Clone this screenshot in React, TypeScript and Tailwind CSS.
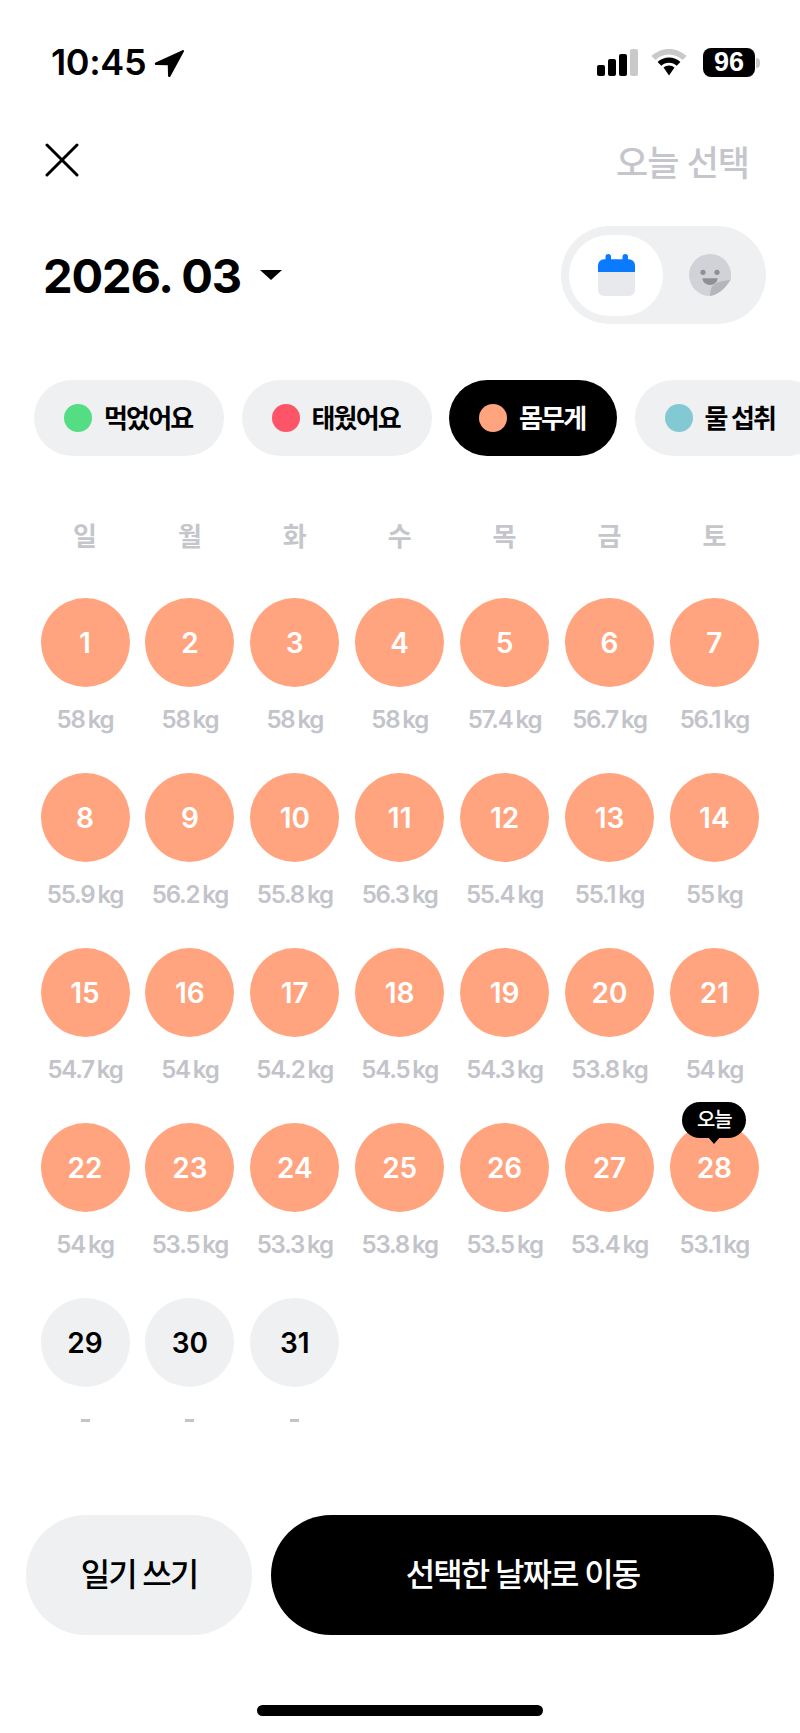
const FONT = "font-['Inter','Noto_Sans_CJK_KR',sans-serif]"

const weekdays = ['일', '월', '화', '수', '목', '금', '토']

const weights = [
  '58', '58', '58', '58', '57.4', '56.7', '56.1',
  '55.9', '56.2', '55.8', '56.3', '55.4', '55.1', '55',
  '54.7', '54', '54.2', '54.5', '54.3', '53.8', '54',
  '54', '53.5', '53.3', '53.8', '53.5', '53.4', '53.1',
]

const filters = [
  { label: '먹었어요', dot: 'bg-[#55dd84]', width: 'w-[190px]' },
  { label: '태웠어요', dot: 'bg-[#fd5468]', width: 'w-[190px]' },
  { label: '몸무게', dot: 'bg-[#ffa47e]', width: 'w-[168px]', active: true },
  { label: '물 섭취', dot: 'bg-[#83c9d3]', width: 'w-[190px]' },
]

function StatusBar() {
  return (
    <div className="flex items-center justify-between pt-[48px] pl-[51px] pr-[40px] h-[77px]">
      <div className="flex items-center gap-[8px]">
        <span className="text-[36px] leading-[29px] font-semibold tracking-[-0.01em] text-black">10:45</span>
        <svg width="30" height="28" viewBox="0 0 30 28">
          <path d="M28.5 1.2 1.6 13.6c-1.3.6-.9 2.500.5 2.500l11.700.1.200 10.600c0 1.400 1.900 1.800 2.500.5L29.900 2.600c.4-.9-.5-1.800-1.400-1.400Z" fill="#000" />
        </svg>
      </div>
      <div className="flex items-center">
        <div className="flex items-end gap-[3px] h-[27px]">
          <div className="w-[8px] h-[11px] rounded-[2px] bg-black" />
          <div className="w-[8px] h-[17px] rounded-[2px] bg-black" />
          <div className="w-[8px] h-[22px] rounded-[2px] bg-black" />
          <div className="w-[8px] h-[27px] rounded-[2px] bg-[#c9c9c9]" />
        </div>
        <svg className="ml-[13px]" width="36" height="27" viewBox="0 0 36 27">
          <path d="M18 0C11.200 0 5 2.700.4 7.100l4 4C8 7.700 12.800 5.600 18 5.600s10 2.100 13.600 5.500l4-4C31 2.700 24.800 0 18 0Z" fill="#c9c9c9" />
          <path d="M18 8.500c-4.400 0-8.400 1.700-11.400 4.500l3.700 3.700c2-1.800 4.700-3 7.700-3s5.700 1.200 7.700 3l3.700-3.700c-3-2.800-7-4.500-11.400-4.500Z" fill="#000" />
          <path d="M18 16.500c-2.100 0-4 .8-5.500 2.100L18 26.500l5.500-7.900c-1.500-1.300-3.400-2.100-5.500-2.100Z" fill="#000" />
        </svg>
        <div className="ml-[16px] w-[52px] h-[29px] rounded-[8px] bg-black flex items-center justify-center text-white text-[27px] font-bold font-['Liberation_Sans',sans-serif] leading-none">
          96
        </div>
        <div className="ml-[1px] w-[4px] h-[10px] rounded-r-full bg-[#c9c9c9]" />
      </div>
    </div>
  )
}

function CloseIcon() {
  return (
    <svg width="34" height="34" viewBox="0 0 34 34" fill="none" stroke="#000" strokeWidth="3" strokeLinecap="round">
      <path d="M2 2 32 32" />
      <path d="M32 2 2 32" />
    </svg>
  )
}

function CalendarIcon() {
  return (
    <svg width="37" height="42" viewBox="0 0 37 42">
      <path d="M0 18h37v18a6 6 0 0 1-6 6H6a6 6 0 0 1-6-6Z" fill="#e8e9ec" />
      <rect x="7.500" y="0" width="5.500" height="10" rx="2.750" fill="#0a7bff" />
      <rect x="24.500" y="0" width="5.500" height="10" rx="2.750" fill="#0a7bff" />
      <path d="M6 5.300h25a6 6 0 0 1 6 6V18H0v-6.700a6 6 0 0 1 6-6Z" fill="#0a7bff" />
    </svg>
  )
}

function StickerIcon() {
  return (
    <svg width="42" height="42" viewBox="0 0 42 42">
      <path d="M21 0a21 21 0 0 1 20.500 26L21 42A21 21 0 0 1 21 0Z" fill="#d0d2d7" />
      <circle cx="14" cy="18.300" r="2.600" fill="#8e9096" />
      <circle cx="28" cy="18.300" r="2.600" fill="#8e9096" />
      <path d="M13.500 24.300h15c0 3.800-3.300 6.700-7.500 6.700s-7.500-2.900-7.500-6.700Z" fill="#8e9096" />
      <path d="M41.500 26c-6 .6-13 1.600-17 5-2.600 2.200-3.500 6.500-3.500 11 7-.5 15-7 20.500-16Z" fill="#b4b6ba" />
    </svg>
  )
}

function DayCell({ day, weight }: { day: number; weight?: string }) {
  const logged = weight !== undefined
  return (
    <div className="relative flex flex-col items-center">
      {day === 28 && (
        <div className="absolute top-[-21px] left-1/2 -translate-x-1/2 z-10 flex flex-col items-center">
          <div className="w-[64px] h-[36px] rounded-[18px] bg-black text-white text-[20px] font-medium tracking-[-0.05em] flex items-center justify-center">
            오늘
          </div>
          <div className="-mt-px w-0 h-0 border-x-[6px] border-x-transparent border-t-[7px] border-t-black" />
        </div>
      )}
      <div
        className={`w-[89px] h-[89px] rounded-full flex items-center justify-center text-[28px] font-semibold ${
          logged ? 'bg-[#ffa47e] text-white' : 'bg-[#eff0f2] text-black'
        }`}
      >
        {day}
      </div>
      <div className="mt-[13px] h-[40px] flex items-center text-[24px] font-semibold tracking-[-0.05em] text-[#c2c4ca] whitespace-nowrap">
        {logged ? (
          <>
            {weight}
            <span className="ml-[3px]">kg</span>
          </>
        ) : (
          <span className="w-[9px] h-[3px] bg-[#c2c4ca]" />
        )}
      </div>
    </div>
  )
}

export default function App() {
  const days = Array.from({ length: 31 }, (_, i) => i + 1)

  return (
    <div className={`w-[800px] h-[1733px] overflow-hidden bg-white flex flex-col ${FONT}`}>
      <StatusBar />

      <div className="mt-[66px] h-[34px] flex items-center justify-between pl-[45px] pr-[51px]">
        <CloseIcon />
        <span className="text-[35px] pt-[6px] font-medium tracking-[-0.03em] text-[#c5c6cb]">오늘 선택</span>
      </div>

      <div className="mt-[49px] flex items-center justify-between pl-[43px] pr-[34px]">
        <div className="flex items-center gap-[19px]">
          <span className="text-[47px] leading-none font-bold tracking-[-0.025em] text-black">2026. 03</span>
          <div className="w-0 h-0 border-x-[11px] border-x-transparent border-t-[10px] border-t-black" />
        </div>
        <div className="w-[205px] h-[98px] rounded-full bg-[#eff0f2] flex items-center pl-[8px]">
          <div className="w-[94px] h-[81px] rounded-full bg-white flex items-center justify-center">
            <CalendarIcon />
          </div>
          <div className="ml-[26px]">
            <StickerIcon />
          </div>
        </div>
      </div>

      <div className="mt-[56px] flex gap-[17.5px] pl-[34px]">
        {filters.map((filter) => (
          <div
            key={filter.label}
            className={`h-[76px] shrink-0 rounded-full flex items-center pl-[30px] gap-[12px] ${filter.width} ${
              filter.active ? 'bg-black text-white' : 'bg-[#eff0f2] text-black'
            }`}
          >
            <div className={`w-[28px] h-[28px] rounded-full shrink-0 ${filter.dot}`} />
            <span className="text-[26px] font-bold tracking-[-0.07em] whitespace-nowrap">{filter.label}</span>
          </div>
        ))}
      </div>

      <div className="mt-[60px] grid grid-cols-[repeat(7,89px)] gap-x-[15.9px] px-[40.5px]">
        {weekdays.map((day) => (
          <div key={day} className="h-[40px] flex items-center justify-center text-[26px] font-semibold text-[#c5c6cb]">
            {day}
          </div>
        ))}
      </div>

      <div className="mt-[42px] grid grid-cols-[repeat(7,89px)] gap-x-[15.9px] gap-y-[33px] px-[40.5px]">
        {days.map((day) => (
          <DayCell key={day} day={day} weight={weights[day - 1]} />
        ))}
      </div>

      <div className="mt-[75px] flex gap-[19px] pl-[26px] pr-[26px]">
        <div className="w-[226px] h-[120px] rounded-full bg-[#eff0f2] flex items-center justify-center text-[32px] font-medium tracking-[-0.06em] text-black">
          일기 쓰기
        </div>
        <div className="flex-1 h-[120px] rounded-full bg-black flex items-center justify-center text-[32px] font-medium tracking-[-0.06em] text-white">
          선택한 날짜로 이동
        </div>
      </div>

      <div className="mt-[70px] mx-auto w-[286px] h-[11px] rounded-full bg-black" />
    </div>
  )
}
